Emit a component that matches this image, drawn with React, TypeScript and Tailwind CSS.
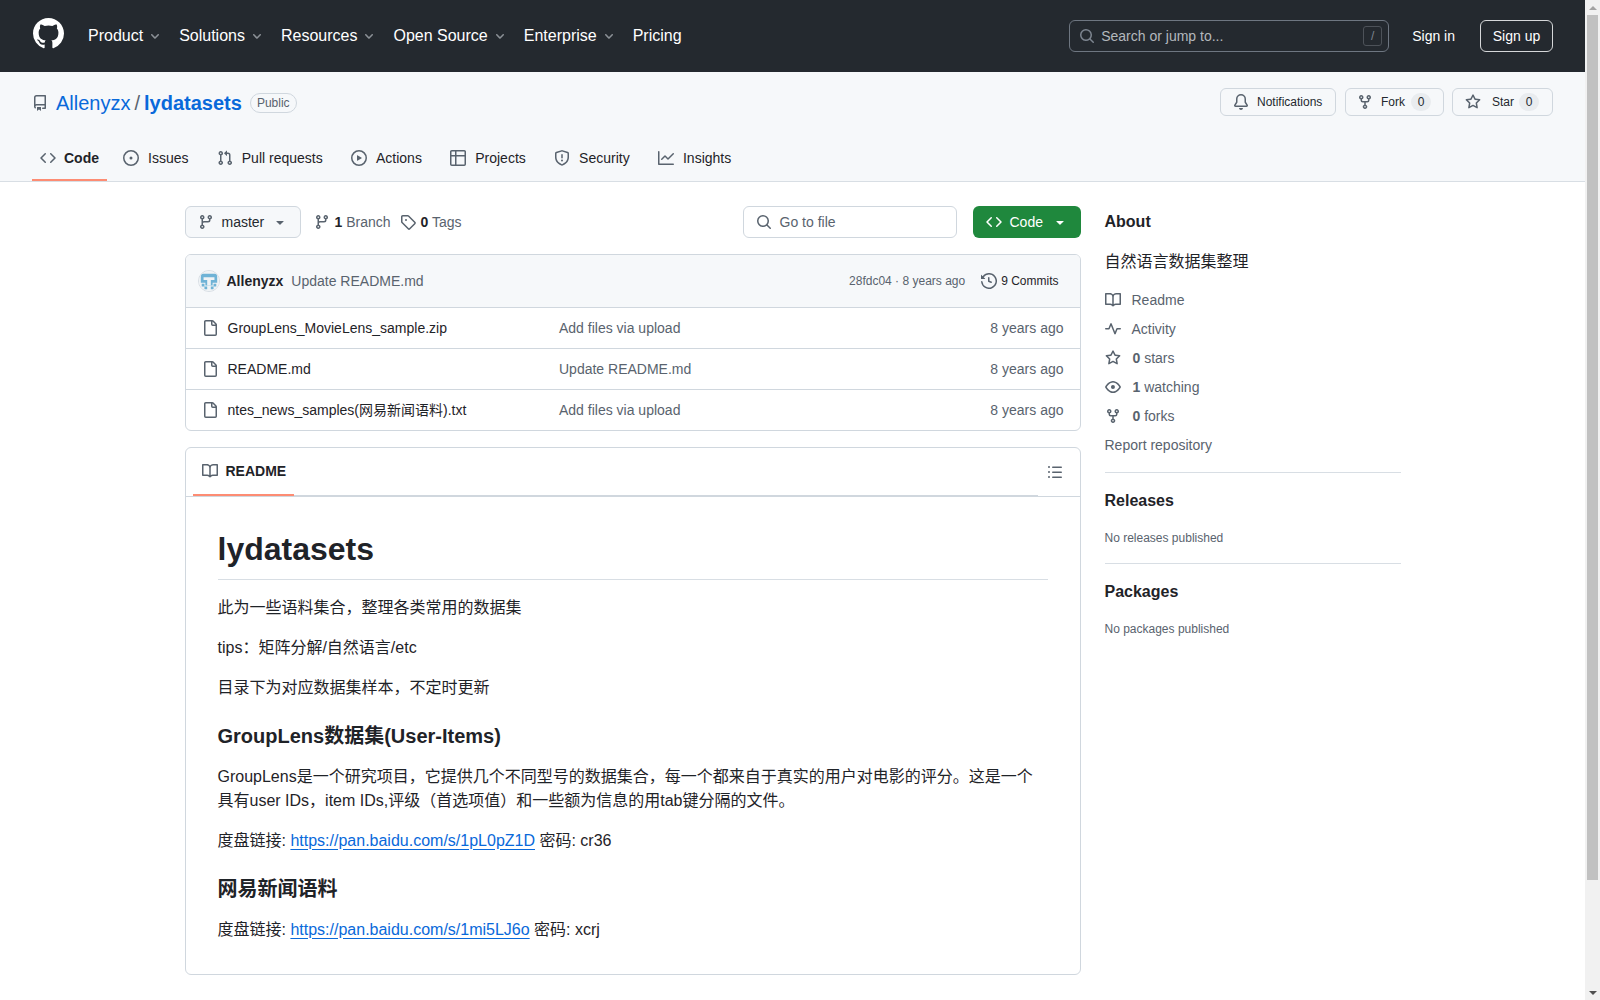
import React from 'react';

const Octicon: React.FC<{ d: string | string[]; size?: number; className?: string }> = ({ d, size = 16, className = '' }) => (
  <svg viewBox="0 0 16 16" width={size} height={size} fill="currentColor" className={`shrink-0 ${className}`}>
    {(Array.isArray(d) ? d : [d]).map((p, i) => (
      <path key={i} d={p} />
    ))}
  </svg>
);

const icons = {
  github:
    'M8 0c4.42 0 8 3.58 8 8a8.013 8.013 0 0 1-5.45 7.59c-.4.08-.55-.17-.55-.38 0-.27.01-1.13.01-2.2 0-.75-.25-1.23-.54-1.48 1.78-.2 3.65-.88 3.65-3.95 0-.88-.31-1.59-.82-2.15.08-.2.36-1.02-.08-2.12 0 0-.67-.22-2.2.82-.64-.18-1.32-.27-2-.27-.68 0-1.36.09-2 .27-1.53-1.03-2.2-.82-2.2-.82-.44 1.1-.16 1.92-.08 2.12-.51.56-.82 1.28-.82 2.15 0 3.06 1.86 3.75 3.64 3.95-.23.2-.44.55-.51 1.07-.46.21-1.61.55-2.33-.66-.15-.24-.6-.83-1.23-.82-.67.01-.27.38.01.53.34.19.73.9.82 1.13.16.45.68 1.31 2.69.94 0 .67.01 1.3.01 1.49 0 .21-.15.45-.55.38A7.995 7.995 0 0 1 0 8c0-4.42 3.58-8 8-8Z',
  repo: 'M2 2.5A2.5 2.5 0 0 1 4.5 0h8.75a.75.75 0 0 1 .75.75v12.5a.75.75 0 0 1-.75.75h-2.5a.75.75 0 0 1 0-1.5h1.75v-2h-8a1 1 0 0 0-.714 1.7.75.75 0 1 1-1.072 1.05A2.495 2.495 0 0 1 2 11.5Zm10.5-1h-8a1 1 0 0 0-1 1v6.708A2.486 2.486 0 0 1 4.5 9h8ZM5 12.25a.25.25 0 0 1 .25-.25h3.5a.25.25 0 0 1 .25.25v3.25a.25.25 0 0 1-.4.2l-1.45-1.087a.249.249 0 0 0-.3 0L5.4 15.7a.25.25 0 0 1-.4-.2Z',
  code: 'm11.28 3.22 4.25 4.25a.75.75 0 0 1 0 1.06l-4.25 4.25a.749.749 0 0 1-1.275-.326.749.749 0 0 1 .215-.734L13.94 8l-3.72-3.72a.749.749 0 0 1 .326-1.275.749.749 0 0 1 .734.215Zm-6.56 0a.751.751 0 0 1 1.042.018.751.751 0 0 1 .018 1.042L2.06 8l3.72 3.72a.749.749 0 0 1-.326 1.275.749.749 0 0 1-.734-.215L.47 8.53a.75.75 0 0 1 0-1.06Z',
  issue: ['M8 9.5a1.5 1.5 0 1 0 0-3 1.5 1.5 0 0 0 0 3Z', 'M8 0a8 8 0 1 1 0 16A8 8 0 0 1 8 0ZM1.5 8a6.5 6.5 0 1 0 13 0 6.5 6.5 0 0 0-13 0Z'],
  pull: 'M1.5 3.25a2.25 2.25 0 1 1 3 2.122v5.256a2.251 2.251 0 1 1-1.5 0V5.372A2.25 2.25 0 0 1 1.5 3.25Zm5.677-.177L9.573.677A.25.25 0 0 1 10 .854V2.5h1A2.5 2.5 0 0 1 13.5 5v5.628a2.251 2.251 0 1 1-1.5 0V5a1 1 0 0 0-1-1h-1v1.646a.25.25 0 0 1-.427.177L7.177 3.427a.25.25 0 0 1 0-.354ZM3.75 2.5a.75.75 0 1 0 0 1.5.75.75 0 0 0 0-1.5Zm0 9.5a.75.75 0 1 0 0 1.5.75.75 0 0 0 0-1.5Zm8.25.75a.75.75 0 1 0 1.5 0 .75.75 0 0 0-1.5 0Z',
  play: 'M8 0a8 8 0 1 1 0 16A8 8 0 0 1 8 0ZM1.5 8a6.5 6.5 0 1 0 13 0 6.5 6.5 0 0 0-13 0Zm4.879-2.773 4.264 2.559a.25.25 0 0 1 0 .428l-4.264 2.559A.25.25 0 0 1 6 10.559V5.442a.25.25 0 0 1 .379-.215Z',
  table: 'M0 1.75C0 .784.784 0 1.75 0h12.5C15.216 0 16 .784 16 1.75v12.5A1.75 1.75 0 0 1 14.25 16H1.75A1.75 1.75 0 0 1 0 14.25ZM6.5 6.5v8h7.75a.25.25 0 0 0 .25-.25V6.5Zm8-1.5V1.75a.25.25 0 0 0-.25-.25H6.5V5Zm-13 1.5v7.75c0 .138.112.25.25.25H5v-8ZM5 5V1.5H1.75a.25.25 0 0 0-.25.25V5Z',
  shield: 'M7.467.133a1.748 1.748 0 0 1 1.066 0l5.25 1.68A1.75 1.75 0 0 1 15 3.48V7c0 1.566-.32 3.182-1.303 4.682-.983 1.498-2.585 2.813-5.032 3.855a1.697 1.697 0 0 1-1.33 0c-2.447-1.042-4.049-2.357-5.032-3.855C1.32 10.182 1 8.566 1 7V3.48a1.75 1.75 0 0 1 1.217-1.667Zm.61 1.429a.25.25 0 0 0-.153 0l-5.25 1.68a.25.25 0 0 0-.174.238V7c0 1.358.275 2.666 1.057 3.86.784 1.194 2.121 2.34 4.366 3.297a.196.196 0 0 0 .154 0c2.245-.956 3.582-2.104 4.366-3.298C13.225 9.666 13.5 8.36 13.5 7V3.48a.251.251 0 0 0-.174-.237l-5.25-1.68ZM8.75 4.75v3a.75.75 0 0 1-1.5 0v-3a.75.75 0 0 1 1.5 0ZM9 10.5a1 1 0 1 1-2 0 1 1 0 0 1 2 0Z',
  graph: 'M1.5 1.75V13.5h13.75a.75.75 0 0 1 0 1.5H.75a.75.75 0 0 1-.75-.75V1.75a.75.75 0 0 1 1.5 0Zm14.28 2.53-5.25 5.25a.75.75 0 0 1-1.06 0L7 7.06 4.28 9.78a.751.751 0 0 1-1.042-.018.751.751 0 0 1-.018-1.042l3.25-3.25a.75.75 0 0 1 1.06 0L10 7.94l4.72-4.72a.751.751 0 0 1 1.042.018.751.751 0 0 1 .018 1.042Z',
  bell: 'M8 16a2 2 0 0 0 1.985-1.75c.017-.137-.097-.25-.235-.25h-3.5c-.138 0-.252.113-.235.25A2 2 0 0 0 8 16ZM3 5a5 5 0 0 1 10 0v2.947c0 .05.015.098.042.139l1.703 2.555A1.519 1.519 0 0 1 13.482 13H2.518a1.516 1.516 0 0 1-1.263-2.36l1.703-2.554A.255.255 0 0 0 3 7.947Zm5-3.5A3.5 3.5 0 0 0 4.5 5v2.947c0 .346-.102.683-.294.97l-1.703 2.556a.017.017 0 0 0-.003.01l.001.006c0 .002.002.004.004.006l.006.004.007.001h10.964l.007-.001.006-.004.004-.006.001-.007a.017.017 0 0 0-.003-.01l-1.703-2.554a1.745 1.745 0 0 1-.294-.97V5A3.5 3.5 0 0 0 8 1.5Z',
  fork: 'M5 5.372v.878c0 .414.336.75.75.75h4.5a.75.75 0 0 0 .75-.75v-.878a2.25 2.25 0 1 1 1.5 0v.878a2.25 2.25 0 0 1-2.25 2.25h-1.5v2.128a2.251 2.251 0 1 1-1.5 0V8.5h-1.5A2.25 2.25 0 0 1 3.5 6.25v-.878a2.25 2.25 0 1 1 1.5 0ZM5 3.25a.75.75 0 1 0-1.5 0 .75.75 0 0 0 1.5 0Zm6.75.75a.75.75 0 1 0 0-1.5.75.75 0 0 0 0 1.5Zm-3 8.75a.75.75 0 1 0-1.5 0 .75.75 0 0 0 1.5 0Z',
  star: 'M8 .25a.75.75 0 0 1 .673.418l1.882 3.815 4.21.612a.75.75 0 0 1 .416 1.279l-3.046 2.97.719 4.192a.751.751 0 0 1-1.088.791L8 12.347l-3.766 1.98a.75.75 0 0 1-1.088-.79l.72-4.194L.818 6.374a.75.75 0 0 1 .416-1.28l4.21-.611L7.327.668A.75.75 0 0 1 8 .25Zm0 2.445L6.615 5.5a.75.75 0 0 1-.564.41l-3.097.45 2.24 2.184a.75.75 0 0 1 .216.664l-.528 3.084 2.769-1.456a.75.75 0 0 1 .698 0l2.77 1.456-.53-3.084a.75.75 0 0 1 .216-.664l2.24-2.183-3.096-.45a.75.75 0 0 1-.564-.41L8 2.694Z',
  search: 'M10.68 11.74a6 6 0 0 1-7.922-8.982 6 6 0 0 1 8.982 7.922l3.04 3.04a.749.749 0 0 1-.326 1.275.749.749 0 0 1-.734-.215ZM11.5 7a4.499 4.499 0 1 0-8.997 0A4.499 4.499 0 0 0 11.5 7Z',
  branch: 'M9.5 3.25a2.25 2.25 0 1 1 3 2.122V6A2.5 2.5 0 0 1 10 8.5H6a1 1 0 0 0-1 1v1.128a2.251 2.251 0 1 1-1.5 0V5.372a2.25 2.25 0 1 1 1.5 0v1.836A2.493 2.493 0 0 1 6 7h4a1 1 0 0 0 1-1v-.628A2.25 2.25 0 0 1 9.5 3.25Zm-6 0a.75.75 0 1 0 1.5 0 .75.75 0 0 0-1.5 0Zm8.25-.75a.75.75 0 1 0 0 1.5.75.75 0 0 0 0-1.5ZM4.25 12a.75.75 0 1 0 0 1.5.75.75 0 0 0 0-1.5Z',
  tag: 'M1 7.775V2.75C1 1.784 1.784 1 2.75 1h5.025c.464 0 .91.184 1.238.513l6.25 6.25a1.75 1.75 0 0 1 0 2.474l-5.026 5.026a1.75 1.75 0 0 1-2.474 0l-6.25-6.25A1.752 1.752 0 0 1 1 7.775Zm1.5 0c0 .066.026.13.073.177l6.25 6.25a.25.25 0 0 0 .354 0l5.025-5.025a.25.25 0 0 0 0-.354l-6.25-6.25a.25.25 0 0 0-.177-.073H2.75a.25.25 0 0 0-.25.25ZM6 5a1 1 0 1 1 0 2 1 1 0 0 1 0-2Z',
  caret: 'm4.427 7.427 3.396 3.396a.25.25 0 0 0 .354 0l3.396-3.396A.25.25 0 0 0 11.396 7H4.604a.25.25 0 0 0-.177.427Z',
  history: 'm.427 1.927 1.215 1.215a8.002 8.002 0 1 1-1.6 5.685.75.75 0 1 1 1.493-.154 6.5 6.5 0 1 0 1.18-4.458l1.358 1.358A.25.25 0 0 1 3.896 6H.25A.25.25 0 0 1 0 5.75V2.104a.25.25 0 0 1 .427-.177ZM7.75 4a.75.75 0 0 1 .75.75v2.992l2.028.812a.75.75 0 0 1-.557 1.392l-2.5-1A.751.751 0 0 1 7 8.25v-3.5A.75.75 0 0 1 7.75 4Z',
  file: 'M2 1.75C2 .784 2.784 0 3.75 0h6.586c.464 0 .909.184 1.237.513l2.914 2.914c.329.328.513.773.513 1.237v9.586A1.75 1.75 0 0 1 13.25 16h-9.5A1.75 1.75 0 0 1 2 14.25Zm1.75-.25a.25.25 0 0 0-.25.25v12.5c0 .138.112.25.25.25h9.5a.25.25 0 0 0 .25-.25V6h-2.75A1.75 1.75 0 0 1 9 4.25V1.5Zm6.75.062V4.25c0 .138.112.25.25.25h2.688l-.011-.013-2.914-2.914-.013-.011Z',
  book: 'M0 1.75A.75.75 0 0 1 .75 1h4.253c1.227 0 2.317.59 3 1.501A3.743 3.743 0 0 1 11.006 1h4.245a.75.75 0 0 1 .75.75v10.5a.75.75 0 0 1-.75.75h-4.507a2.25 2.25 0 0 0-1.591.659l-.622.621a.75.75 0 0 1-1.06 0l-.622-.621A2.25 2.25 0 0 0 5.258 13H.75a.75.75 0 0 1-.75-.75Zm7.251 10.324.004-5.073-.002-2.253A2.25 2.25 0 0 0 5.003 2.5H1.5v9h3.757a3.75 3.75 0 0 1 1.994.574ZM8.755 4.75l-.004 7.322a3.752 3.752 0 0 1 1.992-.572H14.5v-9h-3.495a2.25 2.25 0 0 0-2.25 2.25Z',
  pulse: 'M6 2c.306 0 .582.187.696.471L10 10.731l1.304-3.26A.751.751 0 0 1 12 7h3.25a.75.75 0 0 1 0 1.5h-2.742l-1.812 4.528a.751.751 0 0 1-1.392 0L6 4.77 4.696 8.03A.75.75 0 0 1 4 8.5H.75a.75.75 0 0 1 0-1.5h2.742l1.812-4.529A.751.751 0 0 1 6 2Z',
  eye: 'M8 2c1.981 0 3.671.992 4.933 2.078 1.27 1.091 2.187 2.345 2.637 3.023a1.62 1.62 0 0 1 0 1.798c-.45.678-1.367 1.932-2.637 3.023C11.67 13.008 9.981 14 8 14c-1.981 0-3.671-.992-4.933-2.078C1.797 10.83.88 9.576.43 8.898a1.62 1.62 0 0 1 0-1.798c.45-.677 1.367-1.931 2.637-3.022C4.33 2.992 6.019 2 8 2ZM1.679 7.932a.12.12 0 0 0 0 .136c.411.622 1.241 1.75 2.366 2.717C5.176 11.758 6.527 12.5 8 12.5c1.473 0 2.825-.742 3.955-1.715 1.124-.967 1.954-2.096 2.366-2.717a.12.12 0 0 0 0-.136c-.412-.621-1.242-1.75-2.366-2.717C10.824 4.242 9.473 3.5 8 3.5c-1.473 0-2.825.742-3.955 1.715-1.124.967-1.954 2.096-2.366 2.717ZM8 10a2 2 0 1 1-.001-3.999A2 2 0 0 1 8 10Z',
  list: 'M5.75 2.5h8.5a.75.75 0 0 1 0 1.5h-8.5a.75.75 0 0 1 0-1.5Zm0 5h8.5a.75.75 0 0 1 0 1.5h-8.5a.75.75 0 0 1 0-1.5Zm0 5h8.5a.75.75 0 0 1 0 1.5h-8.5a.75.75 0 0 1 0-1.5ZM2 14a1 1 0 1 1 0-2 1 1 0 0 1 0 2Zm1-6a1 1 0 1 1-2 0 1 1 0 0 1 2 0ZM2 4a1 1 0 1 1 0-2 1 1 0 0 1 0 2Z',
};

const Chevron = () => (
  <svg viewBox="0 0 12 12" width={12} height={12} fill="currentColor" className="ml-[6px] shrink-0 text-[#8b9096]">
    <path d="M6 8.825c-.2 0-.4-.1-.5-.2l-3.3-3.3c-.3-.3-.3-.8 0-1.1.3-.3.8-.3 1.1 0l2.7 2.7 2.7-2.7c.3-.3.8-.3 1.1 0 .3.3.3.8 0 1.1l-3.2 3.2c-.2.2-.4.3-.6.3Z" />
  </svg>
);

const Avatar = () => (
  <svg viewBox="0 0 22 22" width={22} height={22} className="shrink-0 rounded-full border border-[#d8dee4]">
    <rect width="22" height="22" fill="#f0f3f5" />
    <path d="M2 3h18v10h-5v3H7v-3H2Z" fill="#6fb3d6" />
    <path d="M5 7h12v3h-4v6H9v-6H5Z" fill="#f0f3f5" />
    <path d="M3 14h3v3H3Zm13 0h3v3h-3ZM6 17h3v3H6Zm10 0h-3v3h3Z" fill="#6fb3d6" />
  </svg>
);

const tabs = [
  { label: 'Issues', icon: icons.issue },
  { label: 'Pull requests', icon: icons.pull },
  { label: 'Actions', icon: icons.play },
  { label: 'Projects', icon: icons.table },
  { label: 'Security', icon: icons.shield },
  { label: 'Insights', icon: icons.graph },
];

const files = [
  { name: 'GroupLens_MovieLens_sample.zip', msg: 'Add files via upload' },
  { name: 'README.md', msg: 'Update README.md' },
  { name: 'ntes_news_samples(网易新闻语料).txt', msg: 'Add files via upload' },
];

const Header = () => (
  <header className="flex h-[72px] items-center bg-[#24292f] px-8 text-white">
    <Octicon d={icons.github} size={31} className="ml-px -mt-[5px]" />
    <nav className="ml-6 flex items-center gap-[18px] text-base">
      {['Product', 'Solutions', 'Resources', 'Open Source', 'Enterprise'].map((item) => (
        <div key={item} className="flex items-center">
          {item}
          <Chevron />
        </div>
      ))}
      <div>Pricing</div>
    </nav>
    <div className="ml-auto flex h-8 w-[320px] items-center rounded-md border border-[#6e7681] pl-[9px] pr-[6px] text-sm text-[#b3b8bd]">
      <Octicon d={icons.search} className="text-[#7d8590]" />
      <span className="ml-[6px]">Search or jump to...</span>
      <span className="ml-auto flex h-5 w-[19px] items-center justify-center rounded-[3px] border border-[#4d5259] text-xs text-[#7d8590]">/</span>
    </div>
    <div className="ml-[23px] text-sm">Sign in</div>
    <div className="ml-[25px] flex h-8 w-[73px] items-center justify-center rounded-md border border-[#d5d7d9] text-sm">Sign up</div>
  </header>
);

const RepoBar = () => (
  <div className="h-[110px] border-b border-[#d8dee4] bg-[#f6f8fa]">
    <div className="flex items-center px-8 pt-4">
      <div className="flex items-center pt-[2px]">
        <Octicon d={icons.repo} className="text-[#59636e]" />
        <a className="ml-2 text-xl leading-6 text-[#0969da]">Allenyzx</a>
        <span className="mx-1 text-xl leading-6 text-[#59636e]">/</span>
        <a className="text-xl font-semibold leading-6 text-[#0969da]">lydatasets</a>
        <span className="ml-2 rounded-full border border-[#d0d7de] px-[6px] text-xs leading-[18px] text-[#59636e]">Public</span>
      </div>
      <div className="ml-auto flex items-center text-xs text-[#24292f]">
        <div className="flex h-7 w-[116px] items-center rounded-md border border-[#d0d7de] pl-3">
          <Octicon d={icons.bell} className="text-[#59636e]" />
          <span className="ml-2">Notifications</span>
        </div>
        <div className="ml-[9px] flex h-7 w-[99px] items-center rounded-md border border-[#d0d7de] pl-[11px]">
          <Octicon d={icons.fork} className="text-[#59636e]" />
          <span className="ml-2">Fork</span>
          <span className="ml-[6px] flex h-[18px] w-5 items-center justify-center rounded-full bg-[#e9ecef]">0</span>
        </div>
        <div className="ml-2 flex h-7 w-[101px] items-center rounded-md border border-[#d0d7de] pl-3">
          <Octicon d={icons.star} className="text-[#59636e]" />
          <span className="ml-[11px]">Star</span>
          <span className="ml-[5px] flex h-[18px] w-5 items-center justify-center rounded-full bg-[#e9ecef]">0</span>
        </div>
      </div>
    </div>
    <nav className="mt-[19px] flex gap-2 px-8 text-sm text-[#1f2328]">
      <div className="flex h-[46px] items-center gap-2 border-b-2 border-[#fd8c73] px-2 pt-[2px] font-semibold">
        <Octicon d={icons.code} className="text-[#59636e]" />
        Code
      </div>
      {tabs.map((t) => (
        <div key={t.label} className="flex h-[46px] items-center gap-[9px] pl-2 pr-[12.3px]">
          <Octicon d={t.icon} className="text-[#59636e]" />
          {t.label}
        </div>
      ))}
    </nav>
  </div>
);

const FileBox = () => (
  <div className="mt-4 overflow-hidden rounded-md border border-[#d0d7de] text-sm">
    <div className="flex h-[53px] items-center border-b border-[#d0d7de] bg-[#f6f8fa] pl-3 pr-[21px]">
      <Avatar />
      <span className="ml-[7px] font-semibold text-[#1f2328]">Allenyzx</span>
      <span className="ml-2 text-[#59636e]">Update README.md</span>
      <span className="ml-auto text-xs text-[#59636e]">28fdc04 · 8 years ago</span>
      <Octicon d={icons.history} className="ml-4 text-[#59636e]" />
      <span className="ml-1 text-xs text-[#1f2328]">9 Commits</span>
    </div>
    {files.map((f, i) => (
      <div key={f.name} className={`flex items-center px-4 ${i < 2 ? 'h-[41px] border-b border-[#d0d7de]' : 'h-10'}`}>
        <Octicon d={icons.file} className="text-[#59636e]" />
        <span className="ml-[10px] w-[331.5px] text-[#1f2328]">{f.name}</span>
        <span className="text-[#59636e]">{f.msg}</span>
        <span className="ml-auto text-[#59636e]">8 years ago</span>
      </div>
    ))}
  </div>
);

const Readme = () => (
  <div className="mt-4 rounded-md border border-[#d0d7de] text-[#1f2328]">
    <div className="flex h-[49px] border-b border-[#d0d7de] pl-[7px]">
      <div className="flex h-full items-center gap-2 border-b-2 border-[#fd8c73] pl-[9px] pr-2 text-sm font-semibold">
        <Octicon d={icons.book} className="text-[#59636e]" />
        README
      </div>
      <div className="flex-1 border-b border-[#d0d7de]" />
      <div className="flex w-[42px] items-center pl-[9px]">
        <Octicon d={icons.list} className="text-[#59636e]" />
      </div>
    </div>
    <article className="p-8 text-base leading-6">
      <h1 className="mb-4 border-b border-[#d8dee4] pb-[9.6px] text-[32px] font-semibold leading-10">lydatasets</h1>
      <p className="mb-4">此为一些语料集合，整理各类常用的数据集</p>
      <p className="mb-4">tips：矩阵分解/自然语言/etc</p>
      <p className="mb-4">目录下为对应数据集样本，不定时更新</p>
      <h3 className="mb-4 mt-6 text-xl font-semibold leading-[25px]">GroupLens数据集(User-Items)</h3>
      <p className="mb-4">
        GroupLens是一个研究项目，它提供几个不同型号的数据集合，每一个都来自于真实的用户对电影的评分。这是一个具有user IDs，item IDs,评级（首选项值）和一些额为信息的用tab键分隔的文件。
      </p>
      <p className="mb-4">
        度盘链接: <a className="text-[#0969da] underline underline-offset-[3.2px]">https://pan.baidu.com/s/1pL0pZ1D</a> 密码: cr36
      </p>
      <h3 className="mb-4 mt-6 text-xl font-semibold leading-[25px]">网易新闻语料</h3>
      <p>
        度盘链接: <a className="text-[#0969da] underline underline-offset-[3.2px]">https://pan.baidu.com/s/1mi5LJ6o</a> 密码: xcrj
      </p>
    </article>
  </div>
);

const Stat: React.FC<{ icon: string; n?: string; label: string }> = ({ icon, n, label }) => (
  <div className="mt-2 flex h-[21px] items-center gap-[11px] first:mt-0">
    <Octicon d={icon} className="text-[#59636e]" />
    <span>
      {n && <span className="pl-px font-semibold">{n} </span>}
      {label}
    </span>
  </div>
);

const Sidebar = () => (
  <aside className="w-[296px] shrink-0 pt-1">
    <h2 className="text-base font-semibold leading-6 text-[#1f2328]">About</h2>
    <p className="mt-4 text-base leading-6 text-[#1f2328]">自然语言数据集整理</p>
    <div className="mt-[15px] text-sm text-[#59636e]">
      <Stat icon={icons.book} label="Readme" />
      <Stat icon={icons.pulse} label="Activity" />
      <Stat icon={icons.star} n="0" label="stars" />
      <Stat icon={icons.eye} n="1" label="watching" />
      <Stat icon={icons.fork} n="0" label="forks" />
      <div className="mt-[9px] leading-[21px]">Report repository</div>
    </div>
    <div className="mt-4 border-t border-[#d8dee4] pt-4">
      <h2 className="text-base font-semibold leading-6 text-[#1f2328]">Releases</h2>
      <p className="mt-4 text-xs leading-[18px] text-[#59636e]">No releases published</p>
    </div>
    <div className="mt-4 border-t border-[#d8dee4] pt-4">
      <h2 className="text-base font-semibold leading-6 text-[#1f2328]">Packages</h2>
      <p className="mt-4 text-xs leading-[18px] text-[#59636e]">No packages published</p>
    </div>
  </aside>
);

// the page is one screen tall, so the browser scrollbar is drawn by hand
const Scrollbar = () => (
  <div className="flex w-[15px] shrink-0 flex-col items-center bg-[#f1f1f1]">
    <div className="flex h-[15px] items-center justify-center">
      <div className="h-0 w-0 border-x-[4px] border-b-[4px] border-x-transparent border-b-[#a3a3a3]" />
    </div>
    <div className="h-[865px] w-[11px] bg-[#c1c1c1]" />
    <div className="flex-1" />
    <div className="flex h-[15px] items-center justify-center">
      <div className="h-0 w-0 border-x-[4px] border-t-[4px] border-x-transparent border-t-[#505050]" />
    </div>
  </div>
);

export default function App() {
  return (
    <div className="flex h-screen overflow-hidden bg-white font-['Liberation_Sans','Noto_Sans_CJK_SC',sans-serif]">
      <div className="min-w-0 flex-1">
        <Header />
        <RepoBar />
        <main className="mx-auto flex w-[1216px] gap-6 pt-6">
          <div className="w-[896px] shrink-0">
            <div className="flex h-8 items-center text-sm text-[#59636e]">
              <div className="flex h-8 w-[116px] items-center rounded-md border border-[#d0d7de] bg-[#f6f8fa] pl-3 text-[#24292f]">
                <Octicon d={icons.branch} className="text-[#59636e]" />
                <span className="ml-2">master</span>
                <Octicon d={icons.caret} className="ml-[8px] text-[#59636e]" />
              </div>
              <Octicon d={icons.branch} className="ml-[13px]" />
              <span className="ml-[5px]">
                <b className="font-semibold text-[#1f2328]">1</b> Branch
              </span>
              <Octicon d={icons.tag} className="ml-[9px]" />
              <span className="ml-[5px]">
                <b className="font-semibold text-[#1f2328]">0</b> Tags
              </span>
              <div className="ml-auto flex h-8 w-[214px] items-center rounded-md border border-[#d0d7de] pl-3">
                <Octicon d={icons.search} />
                <span className="ml-2">Go to file</span>
              </div>
              <div className="ml-4 flex h-8 w-[108px] items-center rounded-md bg-[#1f883d] pl-[13px] text-white">
                <Octicon d={icons.code} />
                <span className="ml-2">Code</span>
                <Octicon d={icons.caret} className="ml-[9px]" />
              </div>
            </div>
            <FileBox />
            <Readme />
          </div>
          <Sidebar />
        </main>
      </div>
      <Scrollbar />
    </div>
  );
}
